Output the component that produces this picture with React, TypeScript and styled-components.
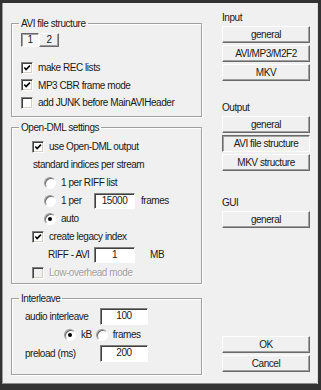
import React from 'react';
import styled, { createGlobalStyle, css } from 'styled-components';

const GlobalStyle = createGlobalStyle`
  html, body {
    margin: 0;
    padding: 0;
    background: #2e2e2e;
  }
  body {
    font-family: 'Liberation Sans', Arial, sans-serif;
    font-size: 10px;
    letter-spacing: -0.45px;
    color: #1a1a1a;
  }
`;

const Frame = styled.div`
  width: 321px;
  height: 390px;
  box-sizing: border-box;
  border-style: solid;
  border-color: #333;
  border-width: 3px 3px 6px 2px;
  background: #f0f0f0;
  display: flex;
  box-shadow: inset 1px 0 0 #9c9c9c, inset -1px 0 0 #dcdcdc, inset 0 -1px 0 #8c8c8c;
`;

const LeftCol = styled.div`
  width: 191px;
  margin-left: 9px;
  padding-top: 13.5px;
  display: flex;
  flex-direction: column;
`;

const Group = styled.fieldset<{ $h: number; $gap?: number }>`
  box-sizing: border-box;
  height: ${(p) => p.$h}px;
  margin: ${(p) => p.$gap ?? 0}px 0 0 0;
  padding: 0;
  min-width: 0;
  border: 1px solid #a0a0a0;
  box-shadow: 1px 1px 0 #fff, inset 1px 1px 0 #fff;
`;

const Legend = styled.legend`
  margin-left: 7px;
  padding: 0 2px;
  line-height: 13px;
  height: 13px;
`;

const Row = styled.div<{ $indent: number; $h?: number; $top?: number }>`
  display: flex;
  align-items: center;
  height: ${(p) => p.$h ?? 18}px;
  padding-left: ${(p) => p.$indent - 1}px;
  margin-top: ${(p) => p.$top ?? 0}px;
  white-space: nowrap;
`;

const Label = styled.span<{ $w?: number; $disabled?: boolean; $ml?: number }>`
  display: inline-block;
  ${(p) => p.$w !== undefined && css`width: ${p.$w}px;`}
  margin-left: ${(p) => p.$ml ?? 0}px;
  ${(p) =>
    p.$disabled &&
    css`
      color: #a0a0a0;
      text-shadow: 1px 1px 0 #fff;
    `}
`;

const Box = styled.span<{ $disabled?: boolean }>`
  box-sizing: border-box;
  width: 12px;
  height: 12px;
  flex: none;
  margin-right: 5px;
  background: ${(p) => (p.$disabled ? '#f0f0f0' : '#fff')};
  border: 1px solid;
  border-color: #808080 #fff #fff #808080;
  box-shadow: inset 1px 1px 0 #404040, inset -1px -1px 0 #d4d0c8;
  display: flex;
  align-items: center;
  justify-content: center;
`;

const CheckBox = ({ checked, disabled }: { checked?: boolean; disabled?: boolean }) => (
  <Box $disabled={disabled}>
    {checked && (
      <svg width='8' height='8' viewBox='0 0 9 9'>
        <path d='M1.5 4 L3.5 6.2 L7.8 1.8' fill='none' stroke='#000' strokeWidth='1.8' />
      </svg>
    )}
  </Box>
);

const RadioCircle = styled.span<{ $ml?: number; $on?: boolean }>`
  box-sizing: border-box;
  width: 12px;
  height: 12px;
  flex: none;
  margin-left: ${(p) => p.$ml ?? 0}px;
  margin-right: 5px;
  border-radius: 50%;
  background: #fff;
  border: 1px solid;
  border-color: #9a9a9a #fff #fff #9a9a9a;
  box-shadow: inset 1px 1px 0 #6a6a6a;
  display: flex;
  align-items: center;
  justify-content: center;

  &::after {
    content: '';
    width: 4px;
    height: 4px;
    border-radius: 50%;
    background: #000;
    display: ${(p) => (p.$on ? 'block' : 'none')};
  }
`;

const Radio = ({ checked, ml }: { checked?: boolean; ml?: number }) => (
  <RadioCircle $ml={ml} $on={checked} />
);

const TextBox = styled.div<{ $w: number; $h?: number }>`
  box-sizing: border-box;
  width: ${(p) => p.$w}px;
  height: ${(p) => p.$h ?? 16}px;
  background: #fff;
  border: 1px solid;
  border-color: #808080 #fff #fff #808080;
  box-shadow: inset 1px 1px 0 #404040;
  text-align: center;
  line-height: 14px;
  flex: none;
`;

const Tabs = styled.div`
  display: flex;
  margin: 3.5px 0 0 9px;
`;

const Tab = styled.div<{ $w: number; $active?: boolean }>`
  box-sizing: border-box;
  width: ${(p) => p.$w}px;
  height: 14px;
  line-height: 12px;
  text-align: center;
  border: 1px solid;
  ${(p) =>
    p.$active
      ? css`
          background: #f7f7f7;
          border-color: #696969 #fff #fff #696969;
          box-shadow: inset 1px 1px 0 #a0a0a0;
        `
      : css`
          border-color: #fff #696969 #696969 #fff;
          box-shadow: inset -1px -1px 0 #a0a0a0;
        `}
`;

const RightCol = styled.div`
  width: 88px;
  margin-left: 20px;
  padding-bottom: 10px;
  display: flex;
  flex-direction: column;
`;

const Section = styled.div<{ $top: number }>`
  margin-top: ${(p) => p.$top}px;
  line-height: 13px;
  height: 13px;
  margin-bottom: 2.5px;
`;

const PushButton = styled.div<{ $pressed?: boolean }>`
  box-sizing: border-box;
  height: 17px;
  margin-bottom: 2px;
  text-align: center;
  line-height: 15px;
  border: 1px solid;
  ${(p) =>
    p.$pressed
      ? css`
          border-color: #696969 #fff #fff #696969;
          box-shadow: inset 1px 1px 0 #a0a0a0;
        `
      : css`
          border-color: #fff #696969 #696969 #fff;
          box-shadow: inset -1px -1px 0 #a0a0a0;
        `}
`;

const Spacer = styled.div`
  flex: 1;
`;

const App = () => {
  return (
    <>
      <GlobalStyle />
      <Frame>
        <LeftCol>
          <Group $h={100}>
            <Legend>AVI file structure</Legend>
            <Tabs>
              <Tab $w={18} $active>
                1
              </Tab>
              <Tab $w={20}>2</Tab>
            </Tabs>
            <Row $indent={10} $h={17.5} $top={12}>
              <CheckBox checked />
              make REC lists
            </Row>
            <Row $indent={10} $h={17.5}>
              <CheckBox checked />
              MP3 CBR frame mode
            </Row>
            <Row $indent={10} $h={17.5}>
              <CheckBox />
              add JUNK before MainAVIHeader
            </Row>
          </Group>

          <Group $h={163} $gap={4.5}>
            <Legend>Open-DML settings</Legend>
            <Row $indent={21} $top={3.5}>
              <CheckBox checked />
              use Open-DML output
            </Row>
            <Row $indent={22}>standard indices per stream</Row>
            <Row $indent={33}>
              <Radio />1 per RIFF list
            </Row>
            <Row $indent={33}>
              <Radio />
              <Label $w={33}>1 per</Label>
              <TextBox $w={41}>15000</TextBox>
              <Label $ml={6}>frames</Label>
            </Row>
            <Row $indent={33}>
              <Radio checked />
              auto
            </Row>
            <Row $indent={21}>
              <CheckBox checked />
              create legacy index
            </Row>
            <Row $indent={37}>
              <Label $w={46}>RIFF - AVI</Label>
              <TextBox $w={41}>1</TextBox>
              <Label $ml={15}>MB</Label>
            </Row>
            <Row $indent={21}>
              <CheckBox disabled />
              <Label $disabled>Low-overhead mode</Label>
            </Row>
          </Group>

          <Group $h={83} $gap={7.5}>
            <Legend>Interleave</Legend>
            <Row $indent={14} $h={18.5} $top={2.5}>
              <Label $w={75}>audio interleave</Label>
              <TextBox $w={48} $h={17}>
                100
              </TextBox>
            </Row>
            <Row $indent={53} $h={18.5}>
              <Radio checked />
              kB
              <Radio ml={4} />
              frames
            </Row>
            <Row $indent={14} $h={18.5}>
              <Label $w={75}>preload (ms)</Label>
              <TextBox $w={48} $h={17}>
                200
              </TextBox>
            </Row>
          </Group>
        </LeftCol>

        <RightCol>
          <Section $top={7.5}>Input</Section>
          <PushButton>general</PushButton>
          <PushButton>AVI/MP3/M2F2</PushButton>
          <PushButton>MKV</PushButton>

          <Section $top={17.5}>Output</Section>
          <PushButton>general</PushButton>
          <PushButton $pressed>AVI file structure</PushButton>
          <PushButton>MKV structure</PushButton>

          <Section $top={22.5}>GUI</Section>
          <PushButton>general</PushButton>

          <Spacer />
          <PushButton>OK</PushButton>
          <PushButton>Cancel</PushButton>
        </RightCol>
      </Frame>
    </>
  );
};

export default App;
